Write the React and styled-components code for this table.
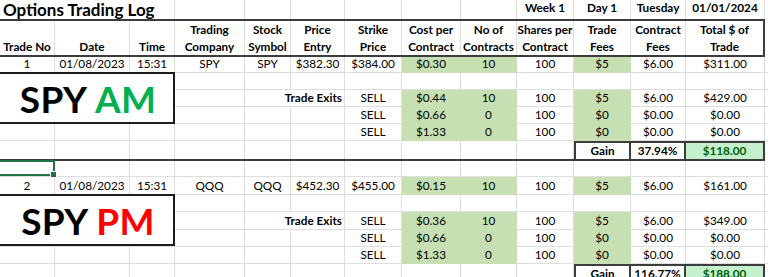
import React from 'react';
import styled, { createGlobalStyle, css } from 'styled-components';

const GRID = '#dedede';
const DARK = '#3c3c3c';
const FILL = '#c6e0b4';
const GAINFILL = '#c6efce';
const WIDTHS = [55, 75, 45, 70, 46, 54, 57, 59, 56, 57, 57, 55, 79];
const COLS = WIDTHS.map((w) => w + 'px').join(' ') + ' 1fr';

const Global = createGlobalStyle`
  html, body { margin: 0; padding: 0; background: #fff; }
  body { font-family: Lato, "Liberation Sans", sans-serif; color: #000; }
`;

const Sheet = styled.div`
  position: relative;
  width: 768px;
  height: 277px;
  overflow: hidden;
  display: flex;
  flex-direction: column;
  background: #fff;
`;

const Row = styled.div`
  flex: none;
  display: grid;
  grid-template-columns: ${COLS};
  height: ${(p) => p.$h}px;
  ${(p) =>
    p.$ruled &&
    css`
      & > div {
        border-bottom: none;
      }
    `}
`;

const Rule = styled.div`
  flex: none;
  width: 765px;
  height: 2px;
  background: ${DARK};
`;

const Cell = styled.div`
  position: relative;
  box-sizing: border-box;
  min-width: 0;
  display: flex;
  align-items: ${(p) => p.$valign || 'flex-end'};
  justify-content: ${(p) =>
    p.$align === 'left' ? 'flex-start' : p.$align === 'right' ? 'flex-end' : 'center'};
  grid-column: span ${(p) => p.$span || 1};
  border-right: 1px solid ${(p) => p.$fill || GRID};
  border-bottom: 1px solid ${(p) => p.$fill || GRID};
  background: ${(p) => p.$fill || 'transparent'};
  padding: ${(p) => (p.$valign === 'flex-start' ? '1px 2px 0' : '0 2px 1px')};
  font-size: 11.75px;
  line-height: 14px;
  font-weight: ${(p) => (p.$bold ? 700 : 400)};
  color: ${(p) => p.$color || '#000'};
  white-space: nowrap;
  ${(p) =>
    p.$gain &&
    css`
      border-top: 2px solid ${DARK};
      border-right: 2px solid ${DARK};
      ${p.$first && `border-left: 2px solid ${DARK};`}
    `}
  ${(p) =>
    p.$edge &&
    css`
      border-right: 2px solid ${DARK};
    `}
  ${(p) =>
    p.$selected &&
    css`
      &::after {
        content: '';
        position: absolute;
        left: -2px;
        right: -1px;
        top: -1px;
        bottom: 0px;
        border: 2px solid #217346;
      }
      &::before {
        content: '';
        position: absolute;
        right: -3px;
        bottom: -2px;
        width: 5px;
        height: 5px;
        background: #217346;
        border: 1px solid #fff;
        z-index: 2;
      }
    `}
`;

const TitleCell = styled(Cell)`
  font-size: 17px;
  line-height: 19px;
  padding: 0 3px;
  align-items: flex-start;
  justify-content: flex-start;
`;

const HeadCell = styled(Cell)`
  flex-direction: column;
  justify-content: flex-end;
  align-items: center;
  text-align: center;
  line-height: 17px;
  font-weight: 700;
  padding: 0 1px;
`;

const Callout = styled.div`
  position: absolute;
  left: -3px;
  top: ${(p) => p.$top}px;
  width: 178px;
  height: 52px;
  box-sizing: border-box;
  border: 2px solid #1c1c1c;
  background: #fff;
  display: flex;
  align-items: center;
  justify-content: center;
  padding-left: 4px;
  font-size: 37px;
  font-weight: 700;
  line-height: 1;
  letter-spacing: 0.3px;
  z-index: 3;
`;

const Accent = styled.span`
  color: ${(p) => p.$color};
`;

const g = (t) => ({ t, fill: FILL });

function renderCells(cells) {
  return cells.map((c, i) => {
    const s = typeof c === 'string' ? { t: c } : c;
    return (
      <Cell
        key={i}
        $fill={s.fill}
        $bold={s.bold}
        $span={s.span}
        $align={s.align}
        $color={s.color}
        $gain={s.gain}
        $first={s.first}
        $selected={s.selected}
        $valign={s.valign}
      >
        {s.t}
      </Cell>
    );
  });
}

const empties = (n) => Array.from({ length: n }, () => '');

const headers = [
  ['', 'Trade No'],
  ['', 'Date'],
  ['', 'Time'],
  ['Trading', 'Company'],
  ['Stock', 'Symbol'],
  ['Price', 'Entry'],
  ['Strike', 'Price'],
  ['Cost per', 'Contract'],
  ['No of', 'Contracts'],
  ['Shares per', 'Contract'],
  ['Trade', 'Fees'],
  ['Contract', 'Fees'],
  ['Total $ of', 'Trade'],
];

function tradeBlock(entry, exits, gain) {
  return {
    entry: [
      entry.no,
      '01/08/2023',
      '15:31',
      entry.sym,
      entry.sym,
      entry.price,
      entry.strike,
      g(entry.cost),
      g('10'),
      '100',
      g('$5'),
      '$6.00',
      entry.total,
      '',
    ],
    exits: exits.map((e, i) => [
      '',
      '',
      '',
      '',
      ...(i === 0
        ? [{ t: 'Trade Exits', bold: true, span: 2, align: 'right' }]
        : ['', '']),
      'SELL',
      g(e.cost),
      g(e.qty),
      '100',
      g(e.fee),
      e.cfee,
      e.total,
      '',
    ]),
    gain: [
      ...empties(10),
      { t: 'Gain', bold: true, gain: true, first: true },
      { t: gain.pct, bold: true, gain: true },
      { t: gain.amt, bold: true, gain: true, fill: GAINFILL, color: '#006100' },
      '',
    ],
  };
}

const t1 = tradeBlock(
  { no: '1', sym: 'SPY', price: '$382.30', strike: '$384.00', cost: '$0.30', total: '$311.00' },
  [
    { cost: '$0.44', qty: '10', fee: '$5', cfee: '$6.00', total: '$429.00' },
    { cost: '$0.66', qty: '0', fee: '$0', cfee: '$0.00', total: '$0.00' },
    { cost: '$1.33', qty: '0', fee: '$0', cfee: '$0.00', total: '$0.00' },
  ],
  { pct: '37.94%', amt: '$118.00' }
);

const t2 = tradeBlock(
  { no: '2', sym: 'QQQ', price: '$452.30', strike: '$455.00', cost: '$0.15', total: '$161.00' },
  [
    { cost: '$0.36', qty: '10', fee: '$5', cfee: '$6.00', total: '$349.00' },
    { cost: '$0.66', qty: '0', fee: '$0', cfee: '$0.00', total: '$0.00' },
    { cost: '$1.33', qty: '0', fee: '$0', cfee: '$0.00', total: '$0.00' },
  ],
  { pct: '116.77%', amt: '$188.00' }
);

export default function App() {
  return (
    <>
      <Global />
      <Sheet>
        <Row $h={19} $ruled>
          <TitleCell $span={3} $bold>
            Options Trading Log
          </TitleCell>
          {renderCells([
            ...empties(6),
            { t: 'Week 1', bold: true, valign: 'flex-start' },
            { t: 'Day 1', bold: true, valign: 'flex-start' },
            { t: 'Tuesday', bold: true, valign: 'flex-start' },
            { t: '01/01/2024', bold: true, valign: 'flex-start' },
            '',
          ])}
        </Row>
        <Rule />
        <Row $h={34} $ruled>
          {headers.map(([a, b], i) => (
            <HeadCell key={i} $edge={i === headers.length - 1}>
              {a && <span>{a}</span>}
              <span>{b}</span>
            </HeadCell>
          ))}
          <Cell />
        </Row>
        <Rule />
        <Row $h={16}>{renderCells(t1.entry)}</Row>
        <Row $h={17}>{renderCells(empties(14))}</Row>
        <Row $h={17}>{renderCells(t1.exits[0])}</Row>
        <Row $h={17}>{renderCells(t1.exits[1])}</Row>
        <Row $h={17}>{renderCells(t1.exits[2])}</Row>
        <Row $h={18} $ruled>
          {renderCells(t1.gain)}
        </Row>
        <Rule />
        <Row $h={16}>{renderCells([{ t: '', selected: true }, ...empties(13)])}</Row>
        <Row $h={18}>{renderCells(t2.entry)}</Row>
        <Row $h={17}>{renderCells(empties(14))}</Row>
        <Row $h={18}>{renderCells(t2.exits[0])}</Row>
        <Row $h={17}>{renderCells(t2.exits[1])}</Row>
        <Row $h={17}>{renderCells(t2.exits[2])}</Row>
        <Row $h={18} $ruled>
          {renderCells(t2.gain)}
        </Row>

        <Callout $top={72}>
          SPY&nbsp;<Accent $color="#00b050">AM</Accent>
        </Callout>
        <Callout $top={194}>
          SPY&nbsp;<Accent $color="#ff0000">PM</Accent>
        </Callout>
      </Sheet>
    </>
  );
}
